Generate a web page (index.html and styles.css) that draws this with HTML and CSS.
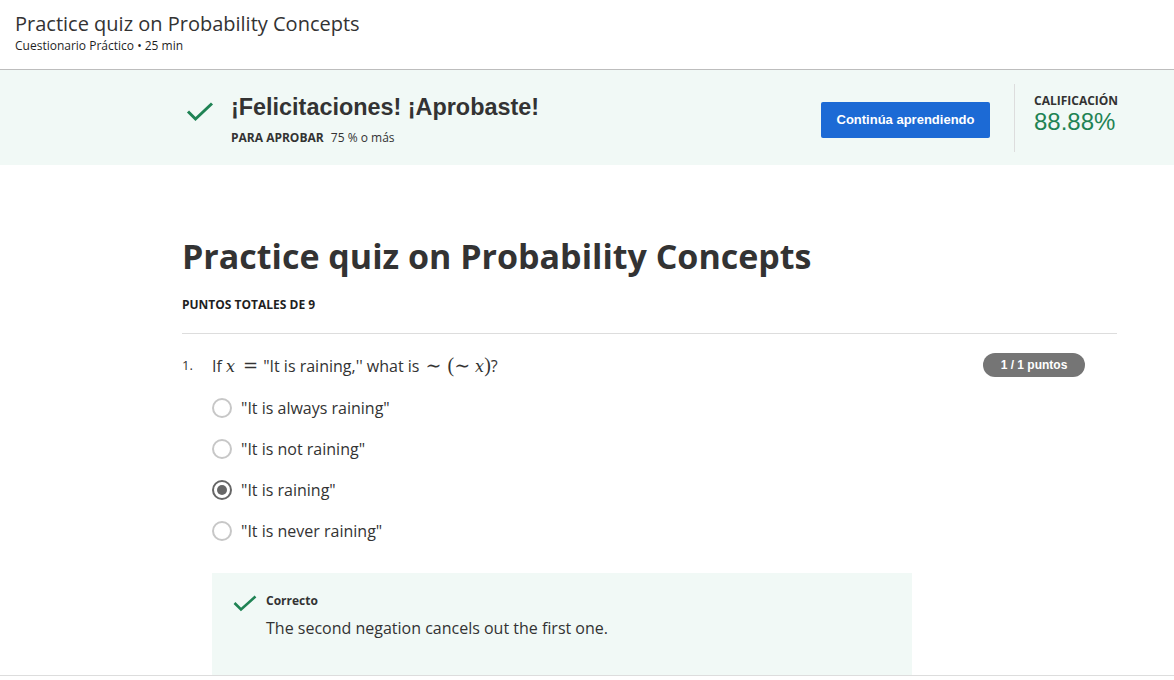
FILE: index.html
```html
<!DOCTYPE html>
<html lang="es">
<head>
<meta charset="utf-8">
<title>Practice quiz on Probability Concepts</title>
<link rel="stylesheet" href="styles.css">
</head>
<body>
<header class="top">
  <div class="top-title">Practice quiz on Probability Concepts</div>
  <div class="top-sub">Cuestionario Práctico • 25 min</div>
</header>
<section class="banner">
  <div class="banner-inner">
    <svg class="big-check" width="28" height="20" viewBox="0 0 28 20"><path d="M2 9.5 L9.5 17 L26 1.5" fill="none" stroke="#1f8354" stroke-width="3"/></svg>
    <div class="banner-text">
      <h2 class="congrats">¡Felicitaciones! ¡Aprobaste!</h2>
      <div class="pass"><span class="pass-label">PARA APROBAR</span> 75 % o más</div>
    </div>
    <button class="continue">Continúa aprendiendo</button>
    <div class="vdiv"></div>
    <div class="grade">
      <div class="grade-label">CALIFICACIÓN</div>
      <div class="grade-value">88.88%</div>
    </div>
  </div>
</section>
<main class="content">
  <h1 class="quiz-title">Practice quiz on Probability Concepts</h1>
  <div class="total">PUNTOS TOTALES DE 9</div>
  <hr class="rule">
  <div class="question">
    <div class="q-head">
      <span class="q-num">1.</span>
      <span class="q-text">If <span class="mi">x</span><span class="mo">=</span>"It is raining,'' what is <span class="mo1">∼</span><span class="mparen">(</span><span class="mo2">∼</span><span class="mi">x</span><span class="mparen">)</span>?</span>
      <span class="pill">1 / 1 puntos</span>
    </div>
    <ul class="options">
      <li class="opt"><span class="radio"></span>"It is always raining"</li>
      <li class="opt"><span class="radio"></span>"It is not raining"</li>
      <li class="opt"><span class="radio checked"></span>"It is raining"</li>
      <li class="opt"><span class="radio"></span>"It is never raining"</li>
    </ul>
    <div class="feedback">
      <svg class="small-check" width="24" height="17" viewBox="0 0 24 17"><path d="M1.5 8 L8 14.5 L22.5 1.5" fill="none" stroke="#1f8354" stroke-width="2.6"/></svg>
      <div class="fb-text">
        <div class="fb-title">Correcto</div>
        <div class="fb-body">The second negation cancels out the first one.</div>
      </div>
    </div>
  </div>
</main>
</body>
</html>
```

FILE: styles.css
```css
* { box-sizing: border-box; }
html, body { margin: 0; padding: 0; }
body {
  font-family: "Open Sans", "Liberation Sans", sans-serif;
  color: #1f1f1f;
  background: #fff;
  height: 676px;
  overflow: hidden;
  border-bottom: 1px solid #ddd;
}
.top {
  height: 70px;
  padding: 10px 15px 0;
  border-bottom: 1px solid #bdbdbd;
}
.top-title {
  font-size: 20px;
  line-height: 28px;
  color: #333;
}
.top-sub {
  font-size: 12px;
  line-height: 16px;
  color: #1f1f1f;
}
.banner {
  background: #f1f9f6;
  height: 95px;
}
.banner-inner {
  margin-left: 182px;
  width: 935px;
  height: 95px;
  display: flex;
  align-items: center;
}
.big-check {
  margin-left: 4px;
  margin-right: 17px;
  margin-top: -12px;
  flex: none;
}
.banner-text { flex: 1; margin-top: 3px; }
.congrats {
  margin: 0;
  font-family: "Liberation Sans", Arial, sans-serif;
  font-weight: 700;
  font-size: 23.4px;
  line-height: 28px;
  color: #333;
}
.pass {
  margin-top: 9px;
  font-size: 12px;
  line-height: 16px;
  color: #333;
}
.pass-label { font-weight: 700; margin-right: 4px; }
.continue {
  flex: none;
  width: 169px;
  height: 36px;
  border: none;
  border-radius: 2px;
  background: #1c6ad5;
  color: #fff;
  font-family: "Liberation Sans", Arial, sans-serif;
  font-weight: 700;
  font-size: 13px;
  margin-right: 24px;
  margin-top: 4px;
  padding: 0;
}
.vdiv {
  flex: none;
  width: 1px;
  height: 68px;
  background: #ddd;
  margin-right: 19px;
}
.grade { flex: none; width: 83px; margin-top: -7px; }
.grade-label {
  font-size: 12px;
  font-weight: 700;
  line-height: 16px;
  color: #333;
}
.grade-value {
  font-family: "Liberation Sans", Arial, sans-serif;
  font-size: 24px;
  line-height: 26px;
  color: #1f8354;
}
.content {
  margin-left: 182px;
  width: 935px;
  padding-top: 68px;
}
.quiz-title {
  margin: 0;
  font-size: 34px;
  font-weight: 700;
  line-height: 46px;
  color: #333;
}
.total {
  margin-top: 18px;
  font-size: 12px;
  font-weight: 700;
  line-height: 16px;
  color: #1f1f1f;
}
.rule {
  margin: 20px 0 0;
  border: 0;
  border-top: 1px solid #ddd;
}
.q-head {
  display: flex;
  align-items: center;
  margin-top: 18px;
  height: 26px;
}
.q-num {
  width: 30px;
  font-size: 13px;
  color: #333;
}
.q-text {
  flex: 1;
  font-size: 16px;
  color: #333;
}
.mi {
  font-family: "DejaVu Serif", serif;
  font-style: italic;
  font-size: 16px;
}
.mo {
  font-family: "DejaVu Serif", serif;
  font-size: 18px;
  margin: 0 5px 0 8px;
}
.mo1 {
  font-family: "DejaVu Serif", serif;
  font-size: 19px;
  margin: 0 6px 0 2px;
}
.mo2 {
  font-family: "DejaVu Serif", serif;
  font-size: 19px;
  margin-right: 5px;
}
.mparen {
  font-family: "Liberation Serif", "DejaVu Serif", serif;
  font-size: 20px;
}
.pill {
  flex: none;
  width: 102px;
  height: 24px;
  line-height: 24px;
  margin-right: 32px;
  text-align: center;
  border-radius: 12px;
  background: #757575;
  color: #fff;
  font-family: "Liberation Sans", Arial, sans-serif;
  font-weight: 700;
  font-size: 12px;
}
.options {
  list-style: none;
  margin: 9px 0 0;
  padding: 0 0 0 30px;
}
.opt {
  display: flex;
  align-items: center;
  height: 41px;
  font-size: 16px;
  color: #333;
}
.radio {
  width: 20px;
  height: 20px;
  border-radius: 50%;
  border: 2px solid #c7c7c7;
  margin-right: 9px;
  display: flex;
  align-items: center;
  justify-content: center;
}
.radio.checked { border-color: #666; }
.radio.checked::after {
  content: "";
  width: 10px;
  height: 10px;
  border-radius: 50%;
  background: #666;
}
.feedback {
  margin: 22px 0 0 30px;
  width: 700px;
  height: 103px;
  background: #f1f9f6;
  display: flex;
  padding: 20px 0 0 21px;
}
.small-check { flex: none; margin-top: 2px; margin-right: 9px; }
.fb-title {
  font-size: 12px;
  font-weight: 700;
  line-height: 16px;
  color: #333;
}
.fb-body {
  margin-top: 7px;
  font-size: 16px;
  line-height: 24px;
  color: #333;
}
```
